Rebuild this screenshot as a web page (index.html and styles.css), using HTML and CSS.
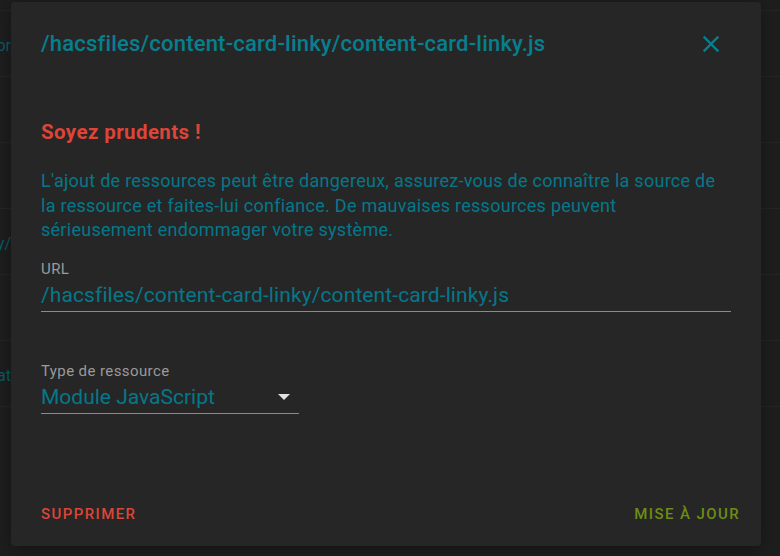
FILE: index.html
```html
<!DOCTYPE html>
<html lang="fr">
<head>
<meta charset="utf-8">
<title>Ressource</title>
<link rel="stylesheet" href="styles.css">
</head>
<body>
<div class="page">
  <div class="topbar"></div>
  <div class="row"><div class="peek-box"><span class="peek">Ressources du tableau de bord Lovelace editor</span></div></div>
  <div class="row"></div>
  <div class="row"></div>
  <div class="row"><div class="peek-box"><span class="peek">/hacsfiles/content-card-linky/</span></div></div>
  <div class="row"></div>
  <div class="row"><div class="peek-box"><span class="peek">Module JavaScript at</span></div></div>
</div>

<div class="dialog">
  <div class="dialog-head">
    <h2 class="title">/hacsfiles/content-card-linky/content-card-linky.js</h2>
    <button class="close" aria-label="Fermer">
      <svg viewBox="0 0 24 24" width="28" height="28"><path d="M19,6.41L17.59,5L12,10.59L6.41,5L5,6.41L10.59,12L5,17.59L6.41,19L12,13.41L17.59,19L19,17.59L13.41,12L19,6.41Z"/></svg>
    </button>
  </div>
  <div class="dialog-body">
    <h3 class="warn">Soyez prudents !</h3>
    <p class="text">L'ajout de ressources peut être dangereux, assurez-vous de connaître la source de la ressource et faites-lui confiance. De mauvaises ressources peuvent sérieusement endommager votre système.</p>
    <div class="field url-field">
      <div class="label">URL</div>
      <div class="value">/hacsfiles/content-card-linky/content-card-linky.js</div>
    </div>
    <div class="field select-field">
      <div class="label">Type de ressource</div>
      <div class="value select-value"><span>Module JavaScript</span><span class="caret"></span></div>
    </div>
  </div>
  <div class="actions">
    <button class="btn btn-delete">SUPPRIMER</button>
    <button class="btn btn-update">MISE À JOUR</button>
  </div>
</div>
</body>
</html>
```
FILE: styles.css
```css
* { box-sizing: border-box; }
html, body { margin: 0; padding: 0; }
body {
  width: 780px;
  height: 556px;
  overflow: hidden;
  background: #1e1e1e;
  font-family: Roboto, "Noto Sans", sans-serif;
  position: relative;
}
.page {
  display: flex;
  flex-direction: column;
}
.topbar {
  height: 11px;
  border-bottom: 1px solid #252525;
}
.row {
  height: 66px;
  border-bottom: 1px solid #252525;
  display: flex;
  align-items: center;
  padding-top: 3px;
}
.peek-box {
  width: 11px;
  display: flex;
  justify-content: flex-end;
  overflow: hidden;
  white-space: nowrap;
}
.peek {
  flex-shrink: 0;
  color: #0a5c66;
  font-size: 16px;
}

.dialog {
  position: absolute;
  left: 11px;
  top: 2px;
  width: 750px;
  height: 544px;
  background: #262626;
  border-radius: 4px;
  box-shadow: 0 4px 18px rgba(0,0,0,0.35);
  display: flex;
  flex-direction: column;
  padding: 0 30px;
}
.dialog-head {
  display: flex;
  align-items: center;
  justify-content: space-between;
  padding-top: 26px;
  height: 58px;
}
.title {
  margin: 0;
  font-size: 22px;
  font-weight: 500;
  letter-spacing: 0.2px;
  color: #067f8f;
  line-height: 32px;
}
.close {
  background: none;
  border: 0;
  padding: 0;
  width: 28px;
  height: 28px;
  margin-right: 6px;
  fill: #067f8f;
  display: flex;
}
.dialog-body {
  flex: 1;
  display: flex;
  flex-direction: column;
}
.warn {
  margin: 58px 0 0;
  font-size: 20.5px;
  font-weight: 700;
  color: #dc4538;
  line-height: 28px;
  letter-spacing: 0.4px;
}
.text {
  margin: 23px 0 0;
  font-size: 18px;
  line-height: 24.5px;
  letter-spacing: 0.27px;
  color: #04788a;
  padding-right: 12px;
}
.field {
  display: flex;
  flex-direction: column;
}
.url-field { margin-top: 17px; }
.select-field { margin-top: 50px; width: 258px; }
.label {
  font-size: 15px;
  letter-spacing: 0.4px;
  color: #9a9a9a;
  line-height: 18px;
}
.value {
  margin-top: 2px;
  font-size: 21px;
  letter-spacing: 0.1px;
  color: #04788a;
  line-height: 30px;
  border-bottom: 1px solid #8a8a8a;
  padding-bottom: 1px;
}
.select-value {
  display: flex;
  align-items: center;
  justify-content: space-between;
}
.select-value span:first-child { letter-spacing: 0; }
.caret {
  width: 0;
  height: 0;
  border-left: 6.5px solid transparent;
  border-right: 6.5px solid transparent;
  border-top: 6.5px solid #e2e2e2;
  margin-right: 9px;
}
.actions {
  display: flex;
  justify-content: space-between;
  align-items: center;
  height: 50px;
  margin: 0 -9px 7px 0;
}
.btn {
  background: none;
  border: 0;
  padding: 0;
  font-family: Roboto, "Noto Sans", sans-serif;
  font-size: 15px;
  font-weight: 500;
  letter-spacing: 1.4px;
}
.btn-delete { color: #dc4538; }
.btn-update { color: #6d8d14; }
```
